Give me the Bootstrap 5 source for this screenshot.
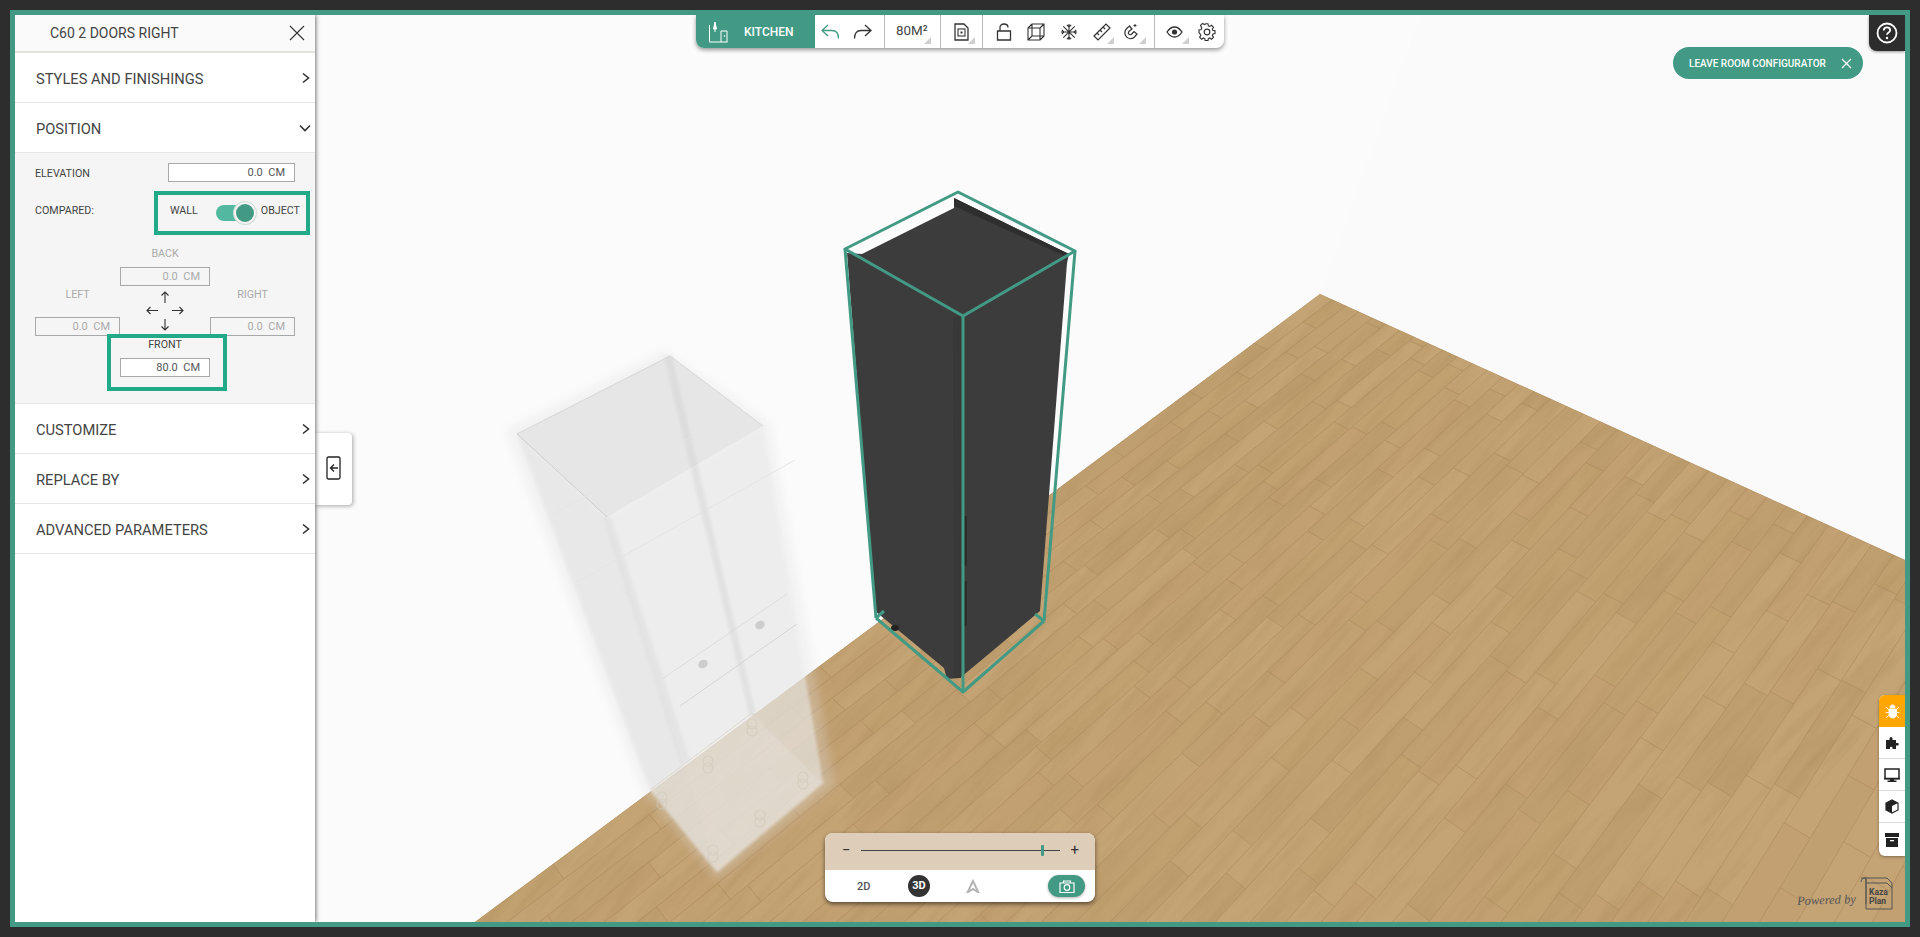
<!DOCTYPE html>
<html lang="en">
<head>
<meta charset="utf-8">
<title>Room configurator</title>
<link href="https://cdn.jsdelivr.net/npm/bootstrap@5.3.0/dist/css/bootstrap.min.css" rel="stylesheet">
<style>
html,body{height:100%;overflow:hidden}
body{background:#2d2d2d;font-family:Roboto,"Liberation Sans",sans-serif;color:#444;padding:10px}
.app-frame{border:5px solid #429a84;height:917px;position:relative;background:#fbfbfb;overflow:hidden}
.scene-svg{position:absolute;left:0;top:0;width:1890px;height:907px}
.side-panel{width:300px;height:907px;background:#fff;position:relative;z-index:3;box-shadow:1px 0 4px rgba(0,0,0,.55)}
.panel-head{height:38px;background:#fafafa;border-bottom:2px solid #e4e4df;padding-left:35px;padding-right:10px;font-size:14px;color:#444}
.acc-row{height:50px;border-bottom:1px solid #e6e6e6;padding-left:21px;padding-right:4px;font-size:14.7px;color:#444}
.acc-row span{padding-top:3px}
.pos-body{height:251px;background:#f5f5f5;border-bottom:1px solid #e6e6e6;padding:10px 20px 0 20px;font-size:10.7px;line-height:16px;color:#444;position:relative}
.lbl-line{height:19px}
.lbl-line span{padding-top:2px}
.dimbox{height:19px;border:1px solid #a8a8a8;background:#fff;text-align:right;white-space:pre;padding-right:9px;line-height:17px;font-size:11px;color:#555}
.dim-elev{width:127px}
.dim-mid{width:90px;margin-top:5px}
.dim-side{width:85px}
.is-off{background:transparent;color:#aaa}
.faint{color:#aaa}
.cmp-line{margin-top:20px;height:18px}
.wall-obj{width:130px;margin-right:-5px}
.tog-wrap{width:40px;height:24px;position:relative;margin:4px 4px 0 18px}
.tog-track{position:absolute;left:0;top:4px;width:30px;height:16px;border-radius:8px;background:#53b8a0}
.tog-knob{position:absolute;left:18px;top:1px;width:22px;height:22px;border-radius:50%;background:#429a84;border:2px solid #f2f2f2;box-shadow:0 0 0 1px #cfdcd7}
.back-col{margin-top:26px}
.side-col{padding-top:1px;height:50px}
.side-lbl{margin-bottom:14px}
.compass{width:40px;height:40px;margin-top:5px}
.front-col{margin-top:1px}
.mark-box{position:absolute;border:4px solid #21aa87;pointer-events:none}
.mark-a{left:139px;top:38px;width:156px;height:44px}
.mark-b{left:92px;top:181px;width:120px;height:57px}
.tab-out{position:absolute;left:300px;top:418px;width:37px;height:72px;padding-bottom:3px;background:#fff;border-radius:0 4px 4px 0;box-shadow:1px 1px 4px rgba(0,0,0,.35);z-index:2}
.top-tools{position:absolute;left:681px;top:0;width:528px;height:33px;background:#fff;border-radius:0 0 8px 8px;box-shadow:0 2px 4px rgba(0,0,0,.4);z-index:2;overflow:hidden}
.kitchen-seg{width:119px;background:#429a84;color:#fff;font-size:12px;font-weight:500;padding-left:12px}
.seg{height:33px;border-right:1px solid #bbb;position:relative}
.seg:last-child{border-right:0}
.seg-undo{width:70px;padding-left:6px;gap:13px}
.seg-area{width:56px;padding-left:11px}
.seg-doc{width:42px}
.seg-tools{width:172px;padding-left:13px;gap:15px}
.seg-view{flex:1;padding-left:11px;gap:15px}
.mag-gap{margin-left:-3px}
.corner-tri{position:absolute;width:0;height:0;border-style:solid;border-width:0 0 7px 7px;border-color:transparent transparent #cfcfcf transparent;bottom:4px}
.tri-area{right:9px}
.tri-doc{right:7px}
.tri-rule{right:40px}
.tri-mag{right:8px}
.tri-eye{left:27px}
.area-txt{font-size:13.4px;color:#444}
.leave-pill{position:absolute;left:1658px;top:32px;width:190px;height:32px;border-radius:16px;background:#429a84;color:#fff;font-size:10px;font-weight:500;padding:1px 11px 0 16px;z-index:2}
.help-tab{position:absolute;left:1854px;top:0;width:36px;height:36px;background:#2d2d2d;border-radius:0 0 0 8px;box-shadow:0 1px 3px rgba(0,0,0,.4);z-index:2}
.side-tools{position:absolute;left:1864px;top:680px;width:26px;border-radius:6px 0 0 6px;background:#fff;box-shadow:0 1px 3px rgba(0,0,0,.35);overflow:hidden;z-index:2}
.side-tool{height:32px;border-bottom:1px solid #ddd}
.side-tool:last-child{border-bottom:0;height:33px}
.tool-hot{background:#ffa600;border-bottom:0}
.view-box{position:absolute;left:810px;top:818px;width:270px;height:69px;border-radius:8px;overflow:hidden;background:#fff;box-shadow:0 2px 4px rgba(0,0,0,.55);z-index:2}
.zoom-line{height:37px;background:#decdb8;padding:0 16px 2px 17px;font-size:15px;color:#333}
.zoom-rail{flex:1;height:1px;background:#444;margin:0 10px;position:relative}
.zoom-thumb{position:absolute;left:180px;top:-5px;width:3px;height:11px;border-radius:1px;background:#429a84}
.mode-line{height:32px;position:relative;font-size:11px;font-weight:500;color:#555}
.mode-2d{position:absolute;left:32px;top:9px}
.mode-3d{position:absolute;left:83px;top:5px;width:22px;height:22px;border-radius:50%;background:#333;color:#fff;font-weight:700}
.mode-a{position:absolute;left:141px;top:8px}
.cam-pill{position:absolute;left:223px;top:5px;width:37px;height:22px;border-radius:11px;background:#429a84;box-shadow:0 1px 3px rgba(0,0,0,.3)}
.power-by{position:absolute;left:1782px;top:876px;font-size:12.5px;font-style:italic;font-family:"Liberation Serif",serif;color:#555;z-index:2;transform:rotate(-2deg)}
.kaza-logo{position:absolute;left:1845px;top:862px;width:33px;height:33px;z-index:2;font-size:8.5px;line-height:9px;font-weight:700;color:#444;padding:11px 0 0 9px}
.kaza-mark{position:absolute;left:0;top:0;width:33px;height:33px}
</style>
</head>
<body>
<div class="app-frame d-flex">
  <svg class="scene-svg" viewBox="15 15 1890 907" xmlns="http://www.w3.org/2000/svg" aria-hidden="true">
    <defs>
      <clipPath id="floorClip"><polygon points="1320,294 475,922 1905,922 1905,560"/></clipPath>
      <filter id="grain" x="0" y="0" width="100%" height="100%">
        <feTurbulence type="fractalNoise" baseFrequency=".012 .09" numOctaves="3" seed="7"/>
        <feColorMatrix type="matrix" values="0 0 0 0 .35  0 0 0 0 .22  0 0 0 0 .08  0 0 0 1.5 -.62"/>
      </filter>
      <filter id="soft"><feGaussianBlur stdDeviation="1.6"/></filter>
      <filter id="softer"><feGaussianBlur stdDeviation="4"/></filter>
    </defs>
    <rect x="15" y="15" width="1890" height="907" fill="#fbfbfb"/>
    <polygon points="1320,294 1905,560 1905,15 1420,15" fill="#fafafa"/>
    <g clip-path="url(#floorClip)">
      <rect x="400" y="280" width="1520" height="650" fill="#c2a072"/>
      <g id="planks"></g>
      <rect x="300" y="100" width="1800" height="1100" filter="url(#grain)" opacity=".3" transform="rotate(-48 1200 650)"/>
    </g>

    <!-- ghost cabinet -->
    <g>
      <polygon points="505,430 664,350 770,422 835,785 717,880 642,790" fill="#dedede" opacity=".3" filter="url(#softer)"/>
      <polygon points="517,434 670,356 763,426 823,783 717,872 650,790" fill="#f4f4f4" opacity=".32" filter="url(#soft)"/>
      <polygon points="517,434 670,356 763,426 607,517" fill="#d9d9d9" opacity=".5"/>
      <polygon points="517,434 607,517 717,872 650,790" fill="#dcdcdc" opacity=".42" filter="url(#soft)"/>
      <polygon points="607,517 763,426 823,783 717,872" fill="#e6e6e6" opacity=".36" filter="url(#soft)"/>
      <polygon points="664,356 672,356 756,715 750,718" fill="#c9c9c9" opacity=".32" filter="url(#soft)"/>
      <polygon points="603,517 611,517 690,760 681,766" fill="#d0d0d0" opacity=".3" filter="url(#soft)"/>
      <polyline points="517,434 607,517" fill="none" stroke="#c8c8c8" stroke-width=".8"/>
      <polyline points="517,434 670,356 763,426" fill="none" stroke="#d0d0d0" stroke-width=".8"/>
      <polyline points="552,515 728,416" fill="none" stroke="#e4e4e4"/>
      <polyline points="577,582 795,460" fill="none" stroke="#e4e4e4"/>
      <polyline points="662,679 787,594" fill="none" stroke="#dcdcdc"/>
      <polyline points="680,706 797,624" fill="none" stroke="#d6d6d6"/>
      <ellipse cx="703" cy="664" rx="5" ry="4" fill="#cdcdcd" transform="rotate(-30 703 664)"/>
      <ellipse cx="760" cy="625" rx="5" ry="4" fill="#cdcdcd" transform="rotate(-30 760 625)"/>
      <polygon points="650,790 752,713 823,783 717,872" fill="#fff" fill-opacity=".14" filter="url(#soft)"/>
      <polyline points="650,790 752,713 823,783" fill="none" stroke="#d9d2c2" stroke-width=".8"/>
      <g fill="none" stroke="#cfc8b6" stroke-width="1.200" opacity=".6">
        <circle cx="662" cy="797" r="5"/><circle cx="662" cy="804" r="5"/>
        <circle cx="708" cy="761" r="5"/><circle cx="708" cy="768" r="5"/>
        <circle cx="752" cy="724" r="5"/><circle cx="752" cy="731" r="5"/>
        <circle cx="803" cy="777" r="5"/><circle cx="803" cy="784" r="5"/>
        <circle cx="760" cy="815" r="5"/><circle cx="760" cy="822" r="5"/>
        <circle cx="713" cy="850" r="5"/><circle cx="713" cy="857" r="5"/>
      </g>
    </g>

    <!-- selected cabinet -->
    <g>
      <polygon points="954,198 1069,254 1067,263 1040,611 960,678 947,679 944,668 875,611 847,253 862,254 954,208" fill="#3c3c3c"/>
      <polygon points="953,318 962,316 961,678 954,678" fill="#383838"/>
      <polygon points="954,198 1069,254 1067,257 954,206" fill="#2e2e2e"/>
      <rect x="963" y="516" width="4" height="50" rx="1" fill="#2b2b2b"/>
      <rect x="963" y="581" width="4" height="45" rx="1" fill="#2b2b2b"/>
      <ellipse cx="895" cy="628" rx="4" ry="3" fill="#222"/>
      <g fill="none" stroke="#429a84" stroke-width="3" stroke-linejoin="round">
        <polygon points="958,192 845,249 963,316 1075,251"/>
        <line x1="845" y1="249" x2="876" y2="618"/>
        <line x1="963" y1="316" x2="963" y2="692"/>
        <line x1="1075" y1="251" x2="1044" y2="621"/>
        <polyline points="876,618 963,692 1044,621"/>
        <line x1="876" y1="618" x2="884" y2="611"/>
        <line x1="1044" y1="621" x2="1035" y2="614"/>
      </g>
    </g>
  </svg>

  <aside class="side-panel d-flex flex-column">
    <div class="panel-head d-flex align-items-center justify-content-between">
      <span>C60 2 DOORS RIGHT</span>
      <svg width="16" height="16" viewBox="0 0 16 16"><path d="M1 1l14 14M15 1L1 15" stroke="#333" stroke-width="1.100" fill="none"/></svg>
    </div>
    <div class="acc-row d-flex align-items-center justify-content-between">
      <span>STYLES AND FINISHINGS</span>
      <svg width="10" height="12" viewBox="0 0 10 12"><path d="M2 1.500L7.500 6 2 10.500" stroke="#333" stroke-width="1.600" fill="none"/></svg>
    </div>
    <div class="acc-row d-flex align-items-center justify-content-between">
      <span>POSITION</span>
      <svg width="12" height="10" viewBox="0 0 12 10"><path d="M1 2.500L6 7.500l5-5" stroke="#333" stroke-width="1.600" fill="none"/></svg>
    </div>
    <div class="pos-body">
      <div class="d-flex align-items-center justify-content-between lbl-line">
        <span>ELEVATION</span>
        <div class="dimbox dim-elev">0.0  CM</div>
      </div>
      <div class="d-flex align-items-center justify-content-between cmp-line">
        <span>COMPARED:</span>
        <div class="d-flex align-items-center justify-content-between wall-obj">
          <span>WALL</span>
          <span class="tog-wrap"><span class="tog-track"></span><span class="tog-knob"></span></span>
          <span>OBJECT</span>
        </div>
      </div>
      <div class="d-flex flex-column align-items-center back-col">
        <span class="faint">BACK</span>
        <div class="dimbox dim-mid is-off">0.0  CM</div>
      </div>
      <div class="d-flex justify-content-between align-items-start">
        <div class="d-flex flex-column align-items-center side-col">
          <span class="faint side-lbl">LEFT</span>
          <div class="dimbox dim-side is-off">0.0  CM</div>
        </div>
        <svg class="compass" viewBox="0 0 40 40"><g fill="none" stroke="#333" stroke-width="1.100"><path d="M20 12V1M16.500 4.500L20 1l3.500 3.500"/><path d="M20 39V28M16.500 35.500L20 39l3.500-3.500"/><path d="M2 19.500h11M5.500 16L2 19.500 5.500 23"/><path d="M27 19.500h11M34.500 16l3.500 3.500-3.500 3.500"/></g></svg>
        <div class="d-flex flex-column align-items-center side-col">
          <span class="faint side-lbl">RIGHT</span>
          <div class="dimbox dim-side is-off">0.0  CM</div>
        </div>
      </div>
      <div class="d-flex flex-column align-items-center front-col">
        <span>FRONT</span>
        <div class="dimbox dim-mid">80.0  CM</div>
      </div>
      <div class="mark-box mark-a"></div>
      <div class="mark-box mark-b"></div>
    </div>
    <div class="acc-row d-flex align-items-center justify-content-between">
      <span>CUSTOMIZE</span>
      <svg width="10" height="12" viewBox="0 0 10 12"><path d="M2 1.500L7.500 6 2 10.500" stroke="#333" stroke-width="1.600" fill="none"/></svg>
    </div>
    <div class="acc-row d-flex align-items-center justify-content-between">
      <span>REPLACE BY</span>
      <svg width="10" height="12" viewBox="0 0 10 12"><path d="M2 1.500L7.500 6 2 10.500" stroke="#333" stroke-width="1.600" fill="none"/></svg>
    </div>
    <div class="acc-row d-flex align-items-center justify-content-between">
      <span>ADVANCED PARAMETERS</span>
      <svg width="10" height="12" viewBox="0 0 10 12"><path d="M2 1.500L7.500 6 2 10.500" stroke="#333" stroke-width="1.600" fill="none"/></svg>
    </div>
  </aside>

  <div class="tab-out d-flex align-items-center justify-content-center">
    <svg width="15" height="24" viewBox="0 0 15 24"><rect x="1" y="1" width="13" height="22" rx="1.500" fill="none" stroke="#222" stroke-width="1.300"/><path d="M12 12H4.500M8 8.500L4.500 12 8 15.500" fill="none" stroke="#222" stroke-width="1.300"/></svg>
  </div>

  <div class="top-tools d-flex">
    <div class="kitchen-seg d-flex align-items-center gap-3">
      <svg width="20" height="22" viewBox="0 0 20 22"><g fill="none" stroke="#fff" stroke-width="1"><path d="M1.500 4v17H19.500"/><path d="M13 21V10h6v11"/><path d="M5.500 8L7 1l1.500 7z" fill="#fff"/><path d="M7 8v3"/></g><circle cx="16.500" cy="15" r=".8" fill="#fff"/></svg>
      <span>KITCHEN</span>
    </div>
    <div class="seg seg-undo d-flex align-items-center">
      <svg width="19" height="16" viewBox="0 0 19 16"><path d="M7 1L1 6.500 7 12M1 6.500h10c4 0 6.500 2.500 6.500 8" fill="none" stroke="#429a84" stroke-width="1.300"/></svg>
      <svg width="19" height="16" viewBox="0 0 19 16"><path d="M12 1l6 5.500L12 12M18 6.500H8c-4 0-6.500 2.500-6.500 8" fill="none" stroke="#333" stroke-width="1.300"/></svg>
    </div>
    <div class="seg seg-area d-flex align-items-center area-txt"><span>80M²</span><i class="corner-tri tri-area"></i></div>
    <div class="seg seg-doc d-flex align-items-center justify-content-center">
      <svg width="15" height="18" viewBox="0 0 15 18"><path d="M1 1h9l4 4v12H1z" fill="none" stroke="#333" stroke-width="1.300"/><rect x="4" y="6" width="7" height="7" fill="none" stroke="#333" stroke-width="1.100"/><rect x="6.500" y="8.500" width="2" height="2" fill="#333"/></svg>
      <i class="corner-tri tri-doc"></i>
    </div>
    <div class="seg seg-tools d-flex align-items-center">
      <svg width="16" height="18" viewBox="0 0 16 18"><path d="M1.500 8h13v9h-13zM4 8V4.500C4 2.500 5.700 1 8 1s4 1.500 4 3.500" fill="none" stroke="#333" stroke-width="1.300"/></svg>
      <svg width="18" height="18" viewBox="0 0 18 18"><path d="M1 5h12v12H1zM5 1h12v12H5zM1 5l4-4M13 5l4-4M1 17l4-4M13 17l4-4" fill="none" stroke="#333" stroke-width="1.100"/></svg>
      <svg width="18" height="18" viewBox="0 0 18 18"><path d="M9 1v16M1 9h16M3.300 3.300l11.400 11.400M14.700 3.300L3.300 14.700M6.800 1.800L9 4l2.200-2.200M6.800 16.200L9 14l2.200 2.200M1.800 6.800L4 9l-2.200 2.200M16.200 6.800L14 9l2.200 2.200" fill="none" stroke="#333" stroke-width="1.100"/></svg>
      <svg width="18" height="18" viewBox="0 0 18 18"><path d="M1 13L13 1l4 4L5 17zM4 10l2 2M7 7l2 2M10 4l2 2" fill="none" stroke="#333" stroke-width="1.200"/></svg>
      <svg class="mag-gap" width="18" height="18" viewBox="0 0 18 18"><path d="M6 3.500C2.500 6 .8 9.500 2.800 13c2 3.500 6 3.500 8.700 1l2.500-3-3-2.500-2.300 2.500c-1 1-2.300 1-3 0s-.2-2.200 1-3.200L9 6 6.500 3z" fill="none" stroke="#333" stroke-width="1.200"/><path d="M12 1v3M10.500 2.500h3" stroke="#333" stroke-width="1"/></svg>
      <i class="corner-tri tri-rule"></i><i class="corner-tri tri-mag"></i>
    </div>
    <div class="seg seg-view d-flex align-items-center">
      <svg width="17" height="12" viewBox="0 0 17 12"><path d="M1 6c2-3 4.500-5 7.500-5S14 3 16 6c-2 3-4.500 5-7.500 5S3 9 1 6z" fill="none" stroke="#333" stroke-width="1.300"/><circle cx="8.500" cy="6" r="2.600" fill="#333"/></svg>
      <svg width="18" height="18" viewBox="0 0 18 18"><g fill="none" stroke="#333" stroke-width="1.200"><circle cx="9" cy="9" r="2.800"/><path d="M7.500 1h3l.4 2.200 1.500.7 1.900-1.300 2.100 2.100-1.300 1.900.7 1.500 2.200.4v3l-2.200.4-.7 1.500 1.300 1.900-2.100 2.100-1.900-1.300-1.500.7-.4 2.200h-3l-.4-2.200-1.500-.7-1.900 1.300-2.100-2.100 1.300-1.900-.7-1.500L1 10.500v-3l2.200-.4.7-1.500L2.600 2.700l2.100-2.100 1.900 1.300 1.500-.7z" transform="translate(.1 -.2) scale(.94)"/></g></svg>
      <i class="corner-tri tri-eye"></i>
    </div>
  </div>

  <div class="leave-pill d-flex align-items-center justify-content-between">
    <span>LEAVE ROOM CONFIGURATOR</span>
    <svg width="11" height="11" viewBox="0 0 11 11"><path d="M1 1l9 9M10 1L1 10" stroke="#fff" stroke-width="1.300" fill="none"/></svg>
  </div>
  <div class="help-tab d-flex align-items-center justify-content-center">
    <svg width="22" height="22" viewBox="0 0 22 22"><circle cx="11" cy="11" r="9.500" fill="none" stroke="#fff" stroke-width="1.800"/><path d="M7.800 8.500c0-2 1.400-3.200 3.200-3.200s3.200 1.200 3.200 2.900c0 2.300-3.200 2.300-3.200 4.600" fill="none" stroke="#fff" stroke-width="1.800"/><circle cx="11" cy="16" r="1.200" fill="#fff"/></svg>
  </div>

  <div class="side-tools d-flex flex-column">
    <div class="side-tool tool-hot d-flex align-items-center justify-content-center">
      <svg width="15" height="15" viewBox="0 0 15 15"><path d="M5 3.500C5 2 6 1 7.500 1S10 2 10 3.500zM4 5h7.500v5c0 2.500-1.500 4-3.700 4S4 12.500 4 10zM1 3l3 3M14 3l-3 3M.5 8.500H4M14.500 8.500H11M1 14l3-3M14 14l-3-3" fill="#fff" stroke="#fff" stroke-width=".9"/></svg>
    </div>
    <div class="side-tool d-flex align-items-center justify-content-center">
      <svg width="15" height="14" viewBox="0 0 15 14"><path d="M1 4h3.500V2.500a1.500 1.500 0 0 1 3 0V4H11v3h1.500a1.300 1.300 0 0 1 0 2.600H11V13H7.500v-1a1.300 1.300 0 0 0-2.600 0v1H1z" fill="#222"/></svg>
    </div>
    <div class="side-tool d-flex align-items-center justify-content-center">
      <svg width="16" height="14" viewBox="0 0 16 14"><path d="M1 1h14v9.500H1z" fill="none" stroke="#222" stroke-width="1.500"/><path d="M0 10h16v1.500H0zM6 11h4v1.500h2.500V14h-9v-1.500H6z" fill="#222"/></svg>
    </div>
    <div class="side-tool d-flex align-items-center justify-content-center">
      <svg width="14" height="15" viewBox="0 0 14 15"><path d="M7 1l6 3v7l-6 3-6-3V4z" fill="none" stroke="#222" stroke-width="1.200"/><path d="M1 4l6 3 6-3-6-3zM1 4v7l6 3V7z" fill="#222"/></svg>
    </div>
    <div class="side-tool d-flex align-items-center justify-content-center">
      <svg width="14" height="14" viewBox="0 0 14 14"><path d="M0 0h14v4H0zM1 5h12v9H1z" fill="#222"/><rect x="5" y="7" width="4" height="1.300" fill="#fff"/></svg>
    </div>
  </div>

  <div class="view-box d-flex flex-column">
    <div class="zoom-line d-flex align-items-center">
      <span>−</span>
      <div class="zoom-rail"><span class="zoom-thumb"></span></div>
      <span>+</span>
    </div>
    <div class="mode-line">
      <span class="mode-2d">2D</span>
      <span class="mode-3d d-flex align-items-center justify-content-center">3D</span>
      <span class="mode-a"><svg width="14" height="14" viewBox="0 0 14 14"><path d="M7 2L1.500 13.500 7 10l5.500 3.500z" fill="none" stroke="#b5b5b5" stroke-width="2"/></svg></span>
      <span class="cam-pill d-flex align-items-center justify-content-center"><svg width="16" height="13" viewBox="0 0 16 13"><path d="M1 3h14v9.500H1zM4.500 3V1h7v2" fill="none" stroke="#fff" stroke-width="1.200"/><circle cx="8" cy="7.500" r="2.800" fill="none" stroke="#fff" stroke-width="1.200"/></svg></span>
    </div>
  </div>

  <span class="power-by">Powered by</span>
  <div class="kaza-logo">
    <svg class="kaza-mark" viewBox="0 0 33 33"><path d="M6 1h21l5 5v26H6z M1 1h5v26" fill="none" stroke="#555" stroke-width="1"/><path d="M1 5c0-3 2-4 5-4M6 6h21l5 5" fill="none" stroke="#555" stroke-width="1"/></svg>
    Kaza<br>Plan
  </div>
</div>

<script src="https://cdn.jsdelivr.net/npm/bootstrap@5.3.0/dist/js/bootstrap.bundle.min.js"></script>
<script>
(function(){
  var g=document.getElementById('planks'),seed=11;
  function rnd(){seed=(seed*16807)%2147483647;return seed/2147483647;}
  function P(s,t){var w=1-s-t;return ((1320-2810*s+450*t)/w).toFixed(1)+','+((294+813*s+511*t)/w).toFixed(1);}
  var tones=['#c3a273','#c1a170','#c4a475','#bf9e6f','#c2a071','#c4a375','#c0a070'];
  var dt=.0072,ds=.042,out='';
  for(var i=0;i<48;i++){
    var t0=i*dt,t1=t0+dt,s=-rnd()*ds;
    while(s<.42){
      var e=s+ds*(.9+rnd()*.25),a=Math.max(s,0);
      if(e>0){
        out+='<polygon points="'+P(a,t0)+' '+P(e,t0)+' '+P(e,t1)+' '+P(a,t1)+'" fill="'+tones[Math.floor(rnd()*tones.length)]+'" stroke="#b08e63" stroke-width=".6"/>';
      }
      s=e;
    }
  }
  g.innerHTML=out;
})();
</script>
</body>
</html>
